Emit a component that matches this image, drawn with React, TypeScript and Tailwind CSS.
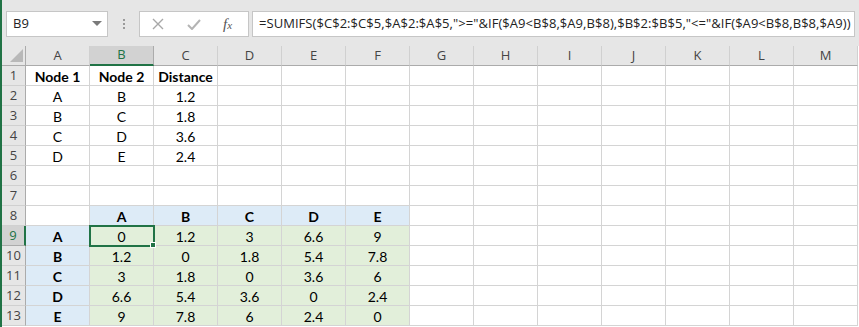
import React from "react";

const cols = ["A", "B", "C", "D", "E", "F", "G", "H", "I", "J", "K", "L", "M"];

type Cell = { v?: string; bold?: boolean; fill?: "blue" | "green" };

const matrix = [
  ["A", "0", "1.2", "3", "6.6", "9"],
  ["B", "1.2", "0", "1.8", "5.4", "7.8"],
  ["C", "3", "1.8", "0", "3.6", "6"],
  ["D", "6.6", "5.4", "3.6", "0", "2.4"],
  ["E", "9", "7.8", "6", "2.4", "0"],
];

function buildRows(): Cell[][] {
  const rows: Cell[][] = [];
  rows.push([{ v: "Node 1", bold: true }, { v: "Node 2", bold: true }, { v: "Distance", bold: true }]);
  rows.push([{ v: "A" }, { v: "B" }, { v: "1.2" }]);
  rows.push([{ v: "B" }, { v: "C" }, { v: "1.8" }]);
  rows.push([{ v: "C" }, { v: "D" }, { v: "3.6" }]);
  rows.push([{ v: "D" }, { v: "E" }, { v: "2.4" }]);
  rows.push([]);
  rows.push([]);
  rows.push([{}, ...["A", "B", "C", "D", "E"].map((v) => ({ v, bold: true, fill: "blue" as const }))]);
  matrix.forEach((r) => {
    rows.push([
      { v: r[0], bold: true, fill: "blue" },
      ...r.slice(1).map((v) => ({ v, fill: "green" as const })),
    ]);
  });
  return rows;
}

const rows = buildRows();
const formula =
  '=SUMIFS($C$2:$C$5,$A$2:$A$5,">="&IF($A9<B$8,$A9,B$8),$B$2:$B$5,"<="&IF($A9<B$8,B$8,$A9))';

function FormulaBar() {
  return (
    <div className="h-[46px] bg-[#e6e6e6] flex items-start pt-[11px] pl-[4px]">
      <div className="w-[102px] h-[26px] bg-white border border-[#c6c6c6] flex items-center justify-between pl-[6px] pr-[5px]">
        <span className="text-[13px] text-[#222] font-['Open_Sans',sans-serif]">B9</span>
        <svg width="10" height="6" viewBox="0 0 10 6">
          <path d="M0 0 L10 0 L5 5 Z" fill="#7a7a7a" />
        </svg>
      </div>
      <div className="w-[31px] h-[26px] flex flex-col items-center justify-center gap-[2px]">
        <span className="w-[2px] h-[2px] bg-[#9a9a9a]" />
        <span className="w-[2px] h-[2px] bg-[#9a9a9a]" />
        <span className="w-[2px] h-[2px] bg-[#9a9a9a]" />
      </div>
      <div className="w-[110px] h-[26px] bg-white border border-[#c6c6c6] flex items-center pl-[12px]">
        <svg width="12" height="12" viewBox="0 0 12 12">
          <path d="M1 1 L11 11 M11 1 L1 11" stroke="#a8a8a8" strokeWidth="1.4" />
        </svg>
        <svg width="14" height="11" viewBox="0 0 14 11" className="ml-[23px]">
          <path d="M1 6 L5 10 L13 1" stroke="#b4b4b4" strokeWidth="2" fill="none" />
        </svg>
        <span className="ml-[22px] text-[15px] italic text-[#555] font-['Liberation_Serif',serif] leading-none">
          f<span className="text-[11px]">x</span>
        </span>
      </div>
      <div className="ml-[3px] w-[603px] h-[26px] bg-white border border-[#c6c6c6] flex items-center pl-[6px] overflow-hidden">
        <span className="text-[13px] text-[#222] whitespace-nowrap font-['Open_Sans',sans-serif] tracking-[0.05px]">
          {formula}
        </span>
      </div>
    </div>
  );
}

function HeaderRow() {
  return (
    <div className="flex h-[20px]">
      <div className="w-[24px] h-[20px] bg-[#e6e6e6] border-r border-b border-[#ababab] flex items-end justify-end pr-[2px] pb-[3px]">
        <svg width="13" height="13" viewBox="0 0 13 13">
          <path d="M13 0 L13 13 L0 13 Z" fill="#b8b8b8" />
        </svg>
      </div>
      {cols.map((c) => {
        const sel = c === "B";
        return (
          <div
            key={c}
            className={
              sel
                ? "w-[64px] h-[20px] bg-[#d2d2d2] border-r border-[#ababab] border-b-2 border-b-[#217346] flex items-center justify-center text-[13px] text-[#217346] font-['Open_Sans',sans-serif]"
                : "w-[64px] h-[20px] bg-[#e6e6e6] border-r border-[#d0d0d0] border-b border-b-[#ababab] flex items-center justify-center text-[13px] text-[#444] font-['Open_Sans',sans-serif]"
            }
          >
            {c}
          </div>
        );
      })}
    </div>
  );
}

function Row({ n, cells }: { n: number; cells: Cell[] }) {
  const sel = n === 9;
  return (
    <div className="flex h-[20px]">
      <div
        className={
          sel
            ? "w-[24px] h-[20px] bg-[#d2d2d2] border-b border-[#ababab] border-r-2 border-r-[#217346] flex items-center justify-center text-[13px] text-[#217346] font-['Open_Sans',sans-serif]"
            : "w-[24px] h-[20px] bg-[#e6e6e6] border-b border-[#d0d0d0] border-r border-r-[#ababab] flex items-center justify-center text-[13px] text-[#444] font-['Open_Sans',sans-serif]"
        }
      >
        {n}
      </div>
      {cols.map((c, i) => {
        const cell = cells[i] || {};
        const bg =
          cell.fill === "blue" ? "bg-[#ddebf7]" : cell.fill === "green" ? "bg-[#e2efda]" : "bg-white";
        const active = sel && c === "B";
        return (
          <div
            key={c}
            className={`relative w-[64px] h-[20px] ${bg} border-r border-b border-[#d4d4d4] flex items-center justify-center pt-[2px] text-[14px] text-black font-['Lato',sans-serif] ${cell.bold ? "font-bold" : ""}`}
          >
            {cell.v}
            {active && (
              <>
                <div className="absolute z-10 left-[-1px] top-[-1px] w-[66px] h-[22px] border-2 border-[#217346]" />
                <div className="absolute z-10 right-[-3px] bottom-[-3px] w-[6px] h-[6px] bg-[#217346] border border-white" />
              </>
            )}
          </div>
        );
      })}
    </div>
  );
}

export default function App() {
  return (
    <div className="w-[859px] h-[327px] flex bg-white overflow-hidden">
      <div className="w-[2px] h-full bg-[#217346]" />
      <div className="flex-1 flex flex-col">
        <FormulaBar />
        <HeaderRow />
        {rows.map((r, i) => (
          <Row key={i} n={i + 1} cells={r} />
        ))}
      </div>
    </div>
  );
}
